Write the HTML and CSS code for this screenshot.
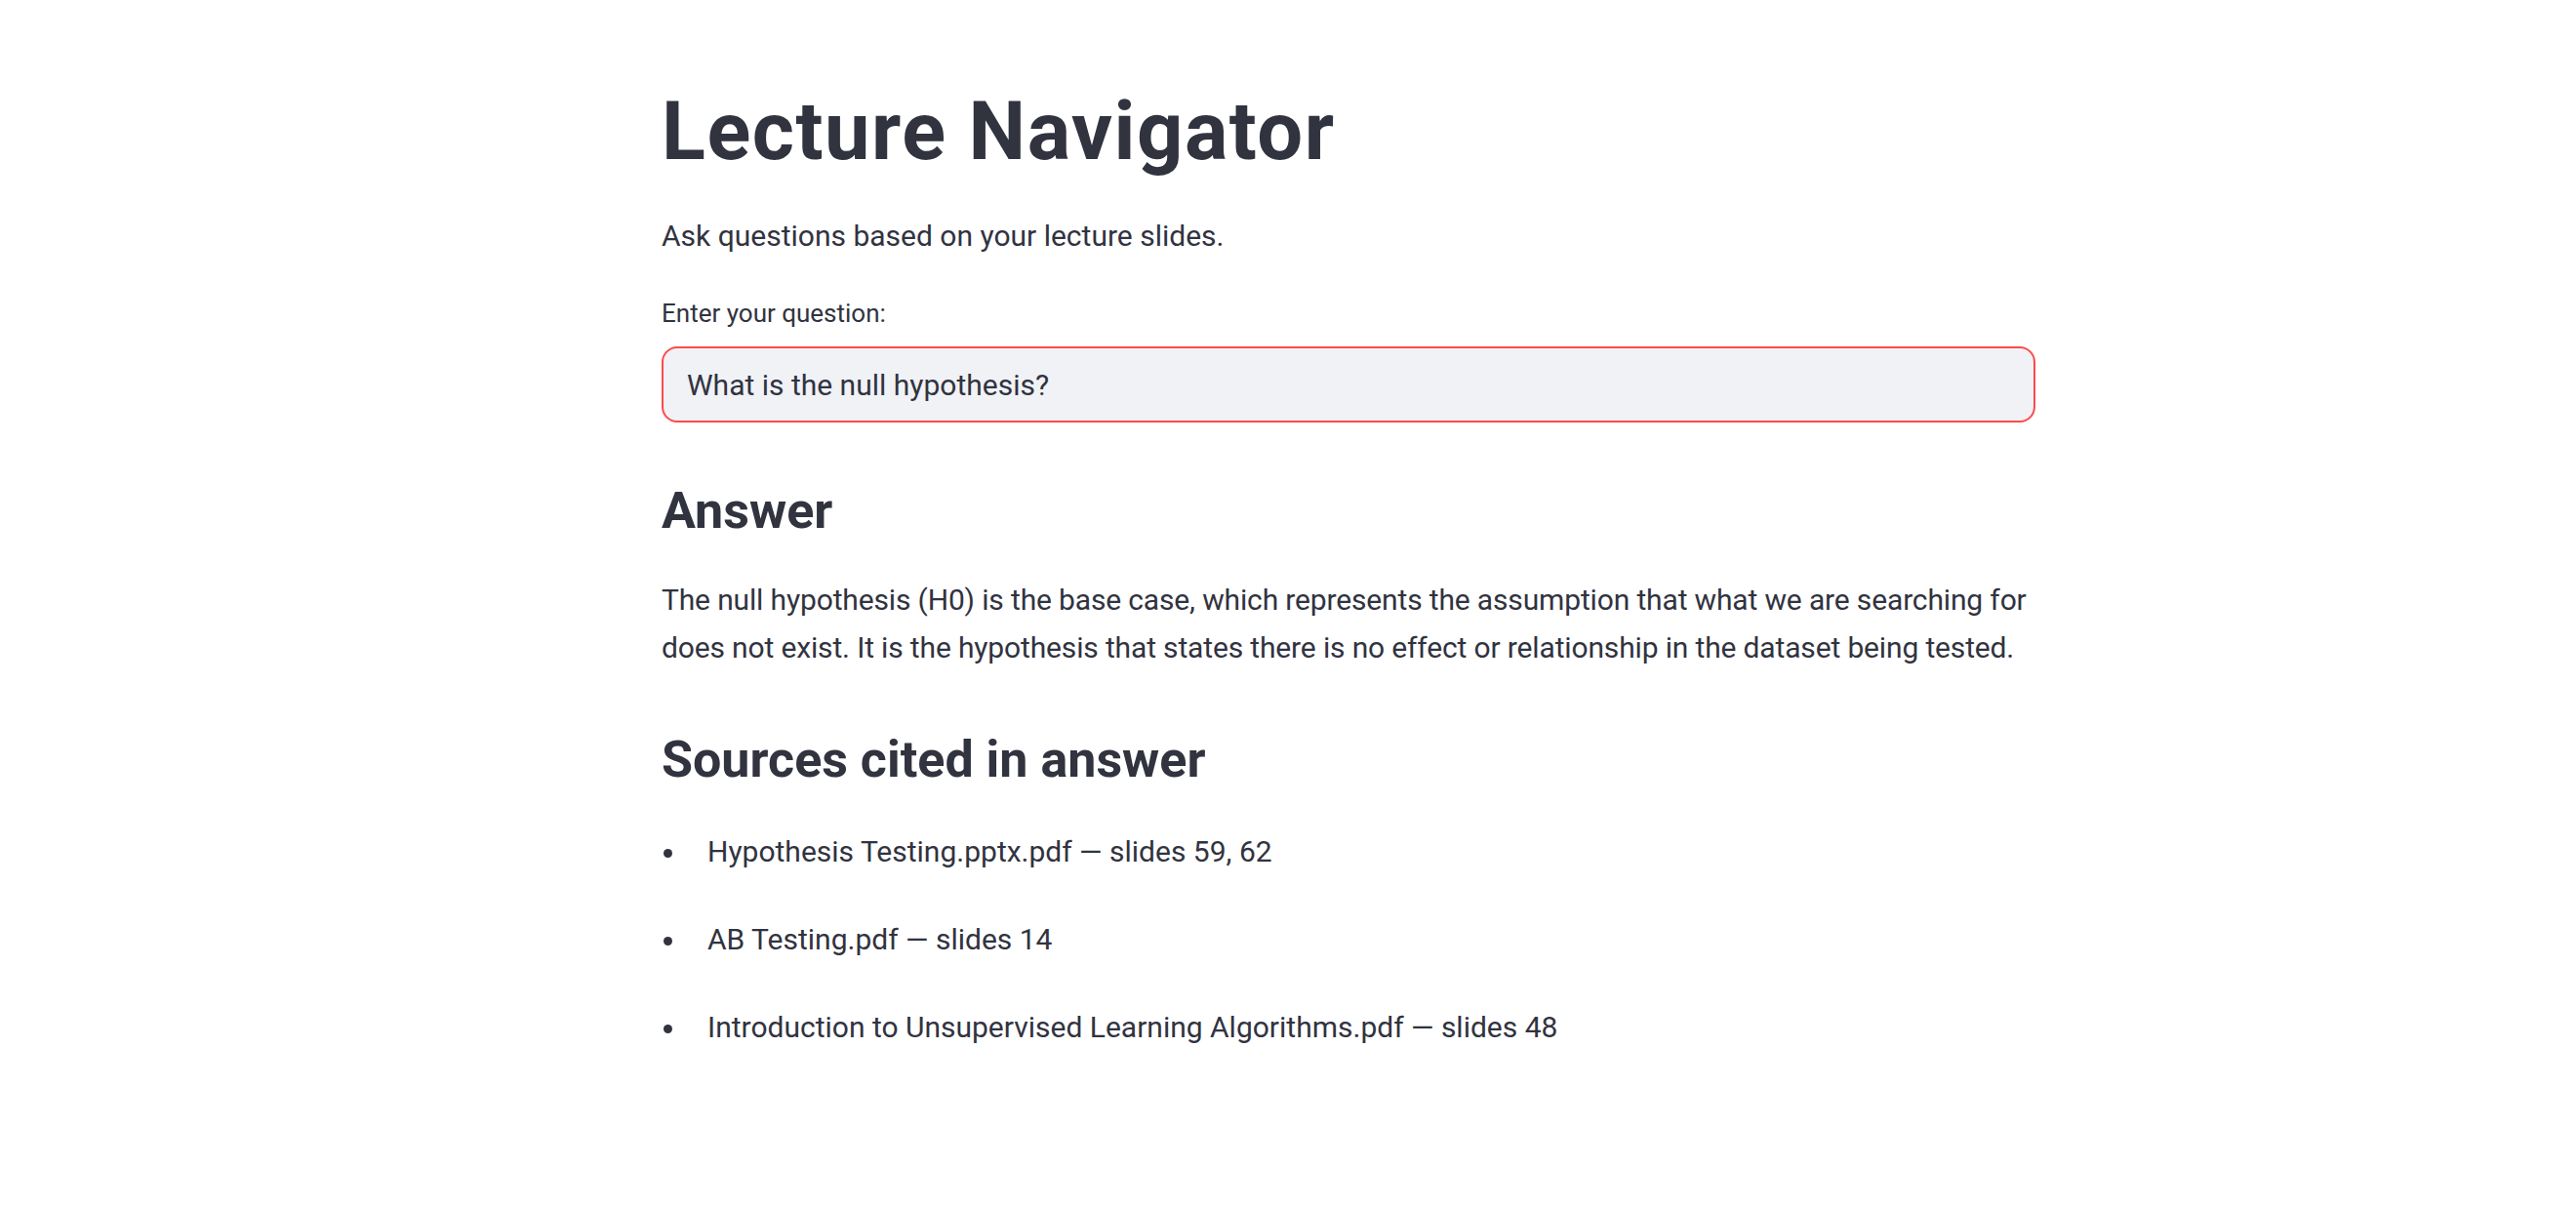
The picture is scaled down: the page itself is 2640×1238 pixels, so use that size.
FILE: index.html
```html
<!DOCTYPE html>
<html lang="en">
<head>
<meta charset="utf-8">
<title>Lecture Navigator</title>
<link rel="stylesheet" href="styles.css">
</head>
<body>
<main class="main">
  <h1 class="title">Lecture Navigator</h1>
  <p class="intro">Ask questions based on your lecture slides.</p>
  <label class="field-label" for="q">Enter your question:</label>
  <input class="field" id="q" type="text" value="What is the null hypothesis?">
  <h3 class="subheader answer-head">Answer</h3>
  <p class="answer">The null hypothesis (H0) is the base case, which represents the assumption that what we are searching for does not exist. It is the hypothesis that states there is no effect or relationship in the dataset being tested.</p>
  <h3 class="subheader sources-head">Sources cited in answer</h3>
  <ul class="sources">
    <li>Hypothesis Testing.pptx.pdf — slides 59, 62</li>
    <li>AB Testing.pdf — slides 14</li>
    <li>Introduction to Unsupervised Learning Algorithms.pdf — slides 48</li>
  </ul>
</main>
</body>
</html>
```
FILE: styles.css
```css
html, body {
  margin: 0;
  padding: 0;
  background: #ffffff;
}

body {
  font-family: Roboto, "Liberation Sans", sans-serif;
  color: #31333f;
}

.main {
  width: 1408px;
  margin-left: 678px;
  padding-top: 85px;
  display: flex;
  flex-direction: column;
  align-items: stretch;
}

.title {
  margin: 0;
  font-size: 83px;
  line-height: 100px;
  font-weight: 700;
  letter-spacing: 1.5px;
}

.intro {
  margin: 33px 0 0;
  font-size: 30px;
  line-height: 48px;
}

.field-label {
  margin-top: 35px;
  font-size: 26px;
  line-height: 40px;
}

.field {
  box-sizing: border-box;
  margin: 14px 0 0;
  width: 100%;
  height: 78px;
  padding: 0 24px;
  border: 2px solid #ff4b4b;
  border-radius: 16px;
  background: #f0f2f6;
  color: #31333f;
  font-family: Roboto, "Liberation Sans", sans-serif;
  font-size: 30px;
  outline: none;
}

.subheader {
  margin: 57px 0 0;
  font-size: 52px;
  line-height: 68px;
  font-weight: 700;
}

.answer {
  margin: 32px 0 0;
  font-size: 30px;
  line-height: 49px;
  letter-spacing: -0.15px;
}

.sources {
  list-style: none;
  margin: 35px 0 0;
  padding: 0;
}

.sources li {
  font-size: 30px;
  line-height: 49px;
  margin-bottom: 41px;
}

.sources li::before {
  content: "";
  display: inline-block;
  width: 9px;
  height: 9px;
  border-radius: 50%;
  background: #31333f;
  vertical-align: 4px;
  margin: 0 36px 0 2px;
}
```
